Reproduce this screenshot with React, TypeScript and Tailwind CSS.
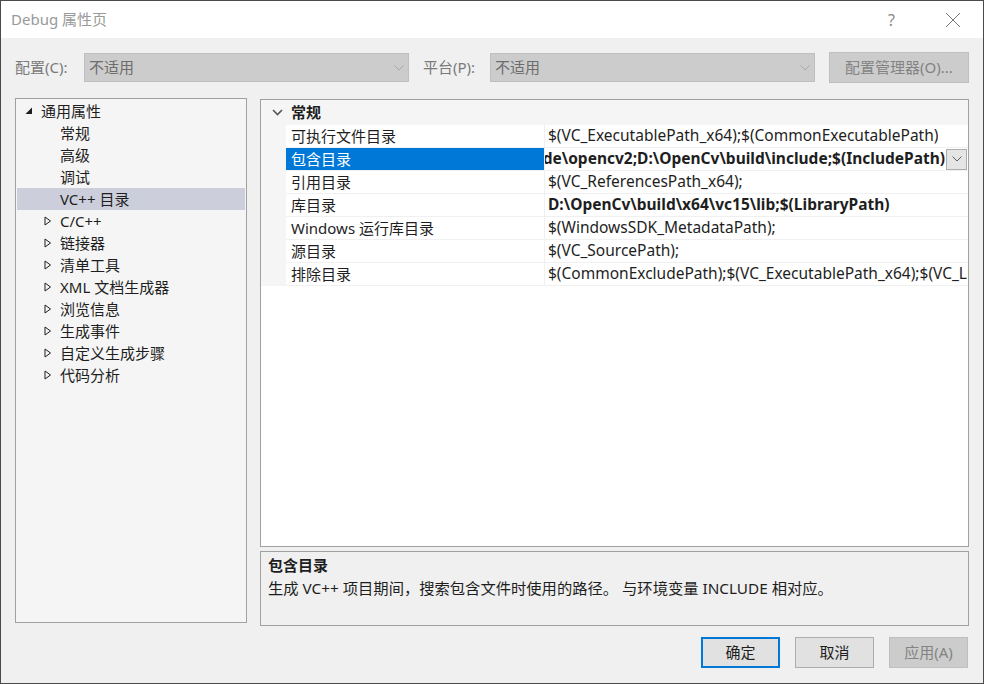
import React from "react";

type TreeItem = { label: string; level: 0 | 1; expander?: "open" | "closed" };

const treeItems: TreeItem[] = [
  { label: "通用属性", level: 0, expander: "open" },
  { label: "常规", level: 1 },
  { label: "高级", level: 1 },
  { label: "调试", level: 1 },
  { label: "VC++ 目录", level: 1 },
  { label: "C/C++", level: 1, expander: "closed" },
  { label: "链接器", level: 1, expander: "closed" },
  { label: "清单工具", level: 1, expander: "closed" },
  { label: "XML 文档生成器", level: 1, expander: "closed" },
  { label: "浏览信息", level: 1, expander: "closed" },
  { label: "生成事件", level: 1, expander: "closed" },
  { label: "自定义生成步骤", level: 1, expander: "closed" },
  { label: "代码分析", level: 1, expander: "closed" },
];

type Prop = { name: string; value: string; bold?: boolean; selected?: boolean };

const props: Prop[] = [
  { name: "可执行文件目录", value: "$(VC_ExecutablePath_x64);$(CommonExecutablePath)" },
  {
    name: "包含目录",
    value: "D:\\OpenCv\\build\\include\\opencv2;D:\\OpenCv\\build\\include;$(IncludePath)",
    bold: true,
    selected: true,
  },
  { name: "引用目录", value: "$(VC_ReferencesPath_x64);" },
  { name: "库目录", value: "D:\\OpenCv\\build\\x64\\vc15\\lib;$(LibraryPath)", bold: true },
  { name: "Windows 运行库目录", value: "$(WindowsSDK_MetadataPath);" },
  { name: "源目录", value: "$(VC_SourcePath);" },
  { name: "排除目录", value: "$(CommonExcludePath);$(VC_ExecutablePath_x64);$(VC_LibraryPath_x64);" },
];

function Chevron({ className }: { className?: string }) {
  return (
    <svg width="10" height="6" viewBox="0 0 10 6" className={className}>
      <path d="M0.5 0.5 L5 5 L9.5 0.5" fill="none" stroke="currentColor" strokeWidth="1" />
    </svg>
  );
}

function Combo({ text }: { text: string }) {
  return (
    <div className="flex h-[29px] w-[325px] items-center justify-between border border-[#bfbfbf] bg-[#cccccc] pl-[4px] pr-[4px] text-[#6d6d6d]">
      <span>{text}</span>
      <Chevron className="text-[#a6a6a6]" />
    </div>
  );
}

function Expander({ kind }: { kind?: "open" | "closed" }) {
  if (kind === "open")
    return (
      <svg width="8" height="8" viewBox="0 0 8 8">
        <polygon points="7,0.5 7,7 0.5,7" fill="#1e1e1e" />
      </svg>
    );
  if (kind === "closed")
    return (
      <svg width="8" height="10" viewBox="0 0 8 10">
        <polygon points="1,1 6.5,5 1,9" fill="none" stroke="#1e1e1e" strokeWidth="1" />
      </svg>
    );
  return null;
}

export default function App() {
  return (
    <div className="flex h-[684px] w-[984px] flex-col border border-[#4a4a4a] font-[Noto_Sans,Noto_Sans_CJK_SC,sans-serif] text-[15px] text-[#1e1e1e]">
      {/* title bar */}
      <div className="flex h-[37px] shrink-0 items-center bg-white pl-[10px]">
        <span className="flex-1 text-[#999999]">Debug 属性页</span>
        <span className="mr-[50px] text-[16px] text-[#8a8a8a]">?</span>
        <svg width="16" height="16" viewBox="0 0 16 16" className="mr-[22px]">
          <path d="M1 1 L15 15 M15 1 L1 15" stroke="#777" strokeWidth="1" />
        </svg>
      </div>

      {/* body */}
      <div className="flex flex-1 flex-col bg-[#f0f0f0] pl-[14px] pr-[14px]">
        {/* config row */}
        <div className="mt-[14px] flex h-[31px] items-center">
          <span className="w-[69px] text-[#7a7a7a]">配置(C):</span>
          <Combo text="不适用" />
          <span className="ml-[14px] w-[67px] text-[#7a7a7a]">平台(P):</span>
          <Combo text="不适用" />
          <div className="ml-[14px] flex h-[31px] w-[140px] items-center justify-center border border-[#bfbfbf] bg-[#cccccc] text-[#838383]">
            配置管理器(O)...
          </div>
        </div>

        {/* main */}
        <div className="mt-[15px] flex">
          {/* tree */}
          <div className="h-[525px] w-[233px] border border-[#a0a0a0] bg-[#f5f5f5] px-[1px] pt-[1px]">
            {treeItems.map((it) => (
              <div
                key={it.label}
                className={
                  "flex h-[22px] items-center " +
                  (it.level === 0 ? "pl-[8px] " : "pl-[27px] ") +
                  (it.label === "VC++ 目录" ? "bg-[#cccedb]" : "")
                }
              >
                <span className="flex w-[16px] items-center">
                  <Expander kind={it.expander} />
                </span>
                <span className="leading-[22px]">{it.label}</span>
              </div>
            ))}
          </div>

          {/* right column */}
          <div className="ml-[13px] flex w-[709px] flex-col">
            <div className="mt-[1px] flex h-[448px] flex-col border border-[#a0a0a0] bg-white">
              <div className="flex h-[25px] shrink-0 items-center bg-[#f5f5f5]">
                <span className="flex w-[30px] justify-center pl-[2px]">
                  <svg width="11" height="7" viewBox="0 0 11 7">
                    <path d="M1 1 L5.5 5.5 L10 1" fill="none" stroke="#555" strokeWidth="1.6" />
                  </svg>
                </span>
                <span className="font-bold">常规</span>
              </div>
              {props.map((p) => (
                <div key={p.name} className="flex h-[23px] shrink-0">
                  <div className="w-[25px] bg-[#f5f5f5]" />
                  <div
                    className={
                      "flex w-[259px] items-center border-r border-b border-[#f0f0f0] pl-[5px] " +
                      (p.selected ? "bg-[#0078d7] text-white" : "")
                    }
                  >
                    {p.name}
                  </div>
                  <div className="flex min-w-0 flex-1 items-center border-b border-[#f0f0f0] text-[15.5px]">
                    {p.selected ? (
                      <>
                        <div className="flex min-w-0 flex-1 justify-end overflow-hidden whitespace-nowrap font-bold">
                          {p.value}
                        </div>
                        <div className="mx-[1px] flex h-[21px] w-[21px] shrink-0 items-center justify-center border border-[#adadad] bg-[#e5e5e5]">
                          <Chevron className="text-[#606060]" />
                        </div>
                      </>
                    ) : (
                      <div className={"overflow-hidden whitespace-nowrap pl-[3px] " + (p.bold ? "font-bold" : "")}>
                        {p.value}
                      </div>
                    )}
                  </div>
                </div>
              ))}
            </div>

            {/* description */}
            <div className="mt-[4px] h-[75px] border border-[#a0a0a0] bg-[#f0f0f0] px-[7px] pt-[2px]">
              <div className="font-bold leading-[23px]">包含目录</div>
              <div className="text-[15.3px] leading-[23px]">
                生成 VC++ 项目期间，搜索包含文件时使用的路径。 与环境变量 INCLUDE 相对应。
              </div>
            </div>
          </div>
        </div>

        {/* buttons */}
        <div className="mt-[11px] flex justify-end gap-[15px] pr-[1px]">
          <div className="flex h-[31px] w-[79px] items-center justify-center border-2 border-[#0078d7] bg-[#e1e1e1]">
            确定
          </div>
          <div className="flex h-[31px] w-[79px] items-center justify-center border border-[#adadad] bg-[#e1e1e1]">
            取消
          </div>
          <div className="flex h-[31px] w-[79px] items-center justify-center border border-[#bfbfbf] bg-[#cccccc] text-[#838383]">
            应用(A)
          </div>
        </div>
      </div>
    </div>
  );
}
